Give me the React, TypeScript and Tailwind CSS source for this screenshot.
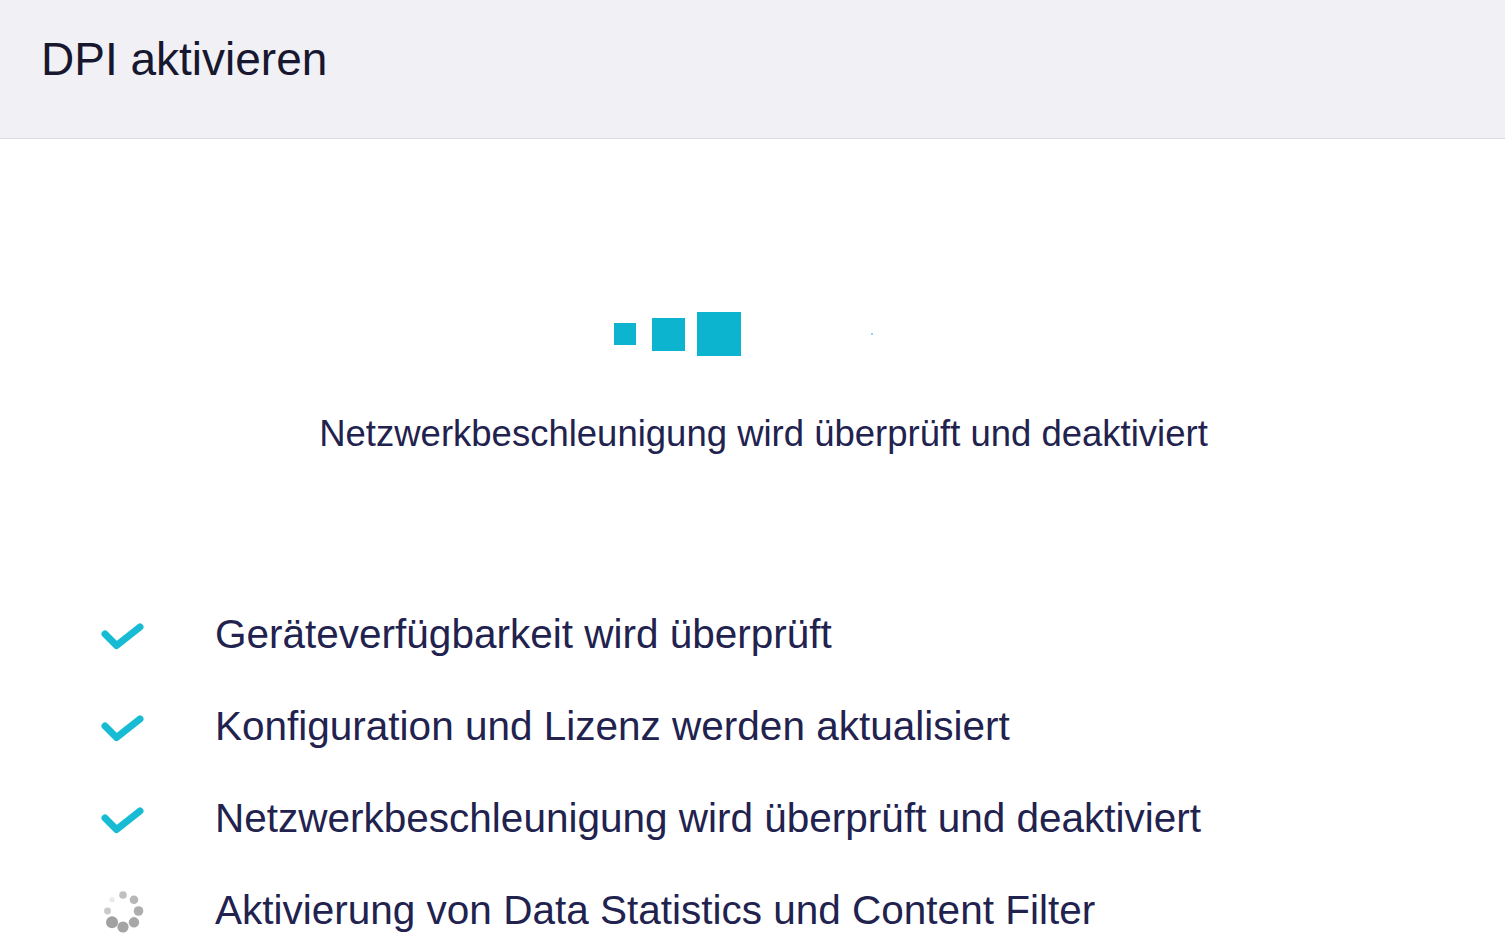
import React from "react";

const steps = [
  { label: "Geräteverfügbarkeit wird überprüft", done: true },
  { label: "Konfiguration und Lizenz werden aktualisiert", done: true },
  { label: "Netzwerkbeschleunigung wird überprüft und deaktiviert", done: true },
  { label: "Aktivierung von Data Statistics und Content Filter", done: false },
];

// spinner dots: angle in degrees, radius, opacity
const spinnerDots = [
  { a: 135, r: 6, o: 0.8 },
  { a: 90, r: 5.6, o: 0.78 },
  { a: 45, r: 5.2, o: 0.75 },
  { a: 0, r: 4.8, o: 0.7 },
  { a: -45, r: 4.3, o: 0.62 },
  { a: -90, r: 3.8, o: 0.55 },
  { a: -135, r: 2.6, o: 0.18 },
  { a: 180, r: 3.4, o: 0.45 },
];

function CheckIcon() {
  return (
    <svg width="48" height="40" viewBox="0 0 48 40" fill="none">
      <path
        d="M7 19 L18.5 30.5 L42 12"
        stroke="#17bcd4"
        strokeWidth="7"
        strokeLinecap="round"
        strokeLinejoin="round"
      />
    </svg>
  );
}

function Spinner() {
  return (
    <svg width="48" height="48" viewBox="0 0 48 48">
      {spinnerDots.map((d, i) => {
        const rad = (d.a * Math.PI) / 180;
        return (
          <circle
            key={i}
            cx={25 + Math.cos(rad) * 15.5}
            cy={24 + Math.sin(rad) * 16}
            r={d.r}
            fill="#8a8a8a"
            opacity={d.o}
          />
        );
      })}
    </svg>
  );
}

export default function App() {
  return (
    <div
      className="h-screen overflow-hidden bg-white"
      style={{ fontFamily: '"Liberation Sans", Arial, sans-serif' }}
    >
      {/* Header */}
      <header className="h-[139px] bg-[#f0f0f5] border-b border-[#dcdce2]">
        <h1 className="pl-[41px] pt-[36px] text-[46px] leading-none text-[#17172f]">
          DPI aktivieren
        </h1>
      </header>

      {/* Loader */}
      <div className="mt-[173px] mx-auto w-[277px] h-[44px] flex items-center">
        <div className="w-[22px] h-[22px] bg-[#0cb4d0]" />
        <div className="ml-[16px] w-[33px] h-[33px] bg-[#0cb4d0]" />
        <div className="ml-[12px] w-[44px] h-[44px] bg-[#0cb4d0]" />
        <div className="ml-[130px] w-[2px] h-[2px] bg-[#7fdcea]" />
      </div>

      <p className="mt-[60px] pl-[22px] text-center text-[36.5px] leading-none text-[#22224f]">
        Netzwerkbeschleunigung wird überprüft und deaktiviert
      </p>

      {/* Steps */}
      <ul className="mt-[136px] pl-[98px]">
        {steps.map((s) => (
          <li key={s.label} className="h-[92px] flex items-center">
            <div className="w-[117px] flex items-center">
              {s.done ? <CheckIcon /> : <Spinner />}
            </div>
            <span className="text-[40.5px] leading-none text-[#22224f]">{s.label}</span>
          </li>
        ))}
      </ul>
    </div>
  );
}
